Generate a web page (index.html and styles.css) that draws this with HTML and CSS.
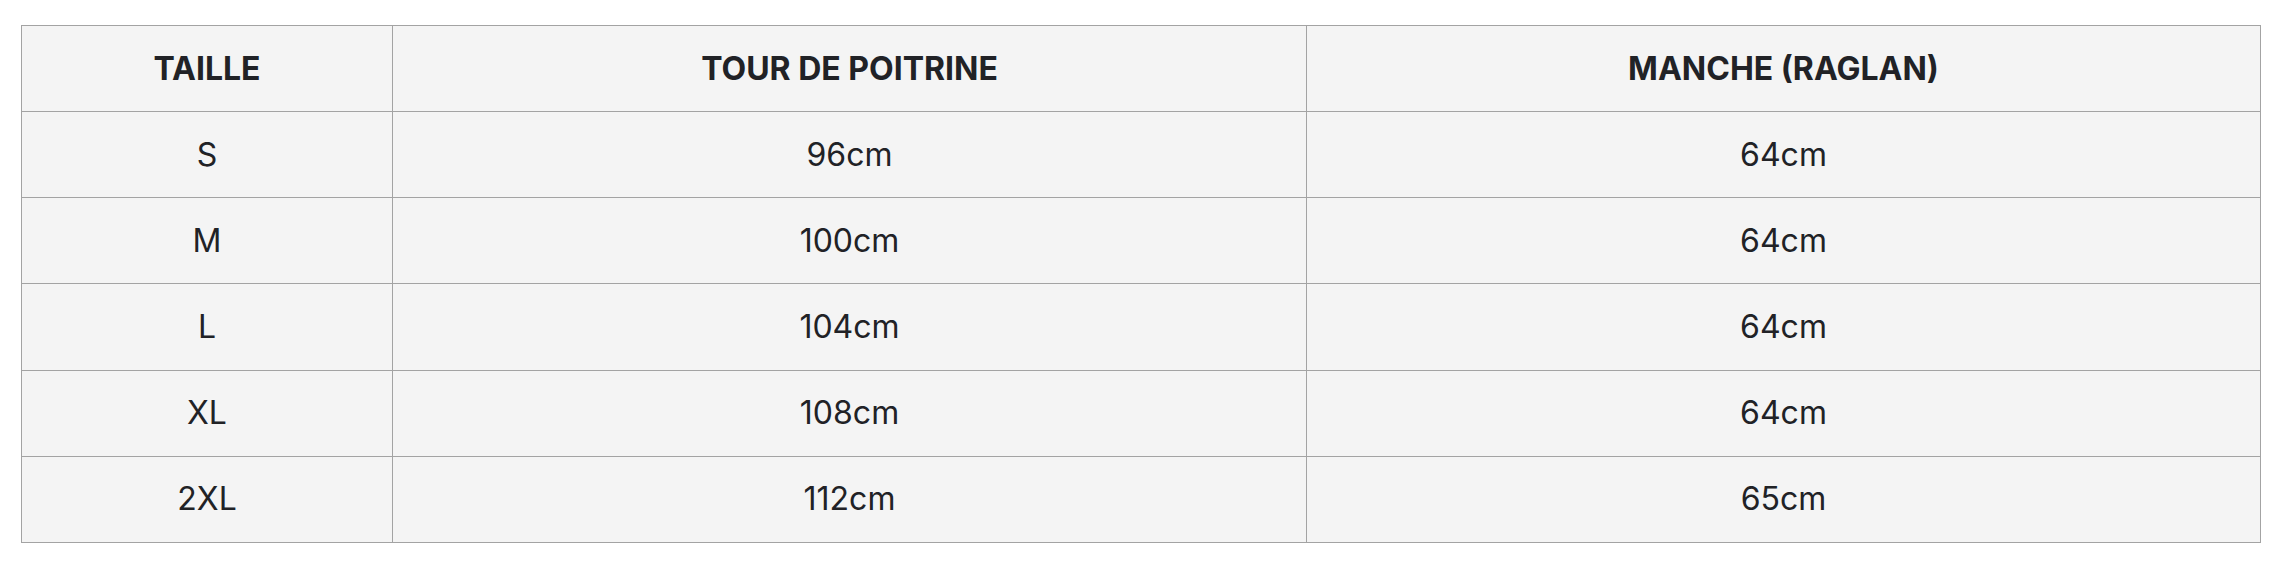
FILE: index.html
```html
<!DOCTYPE html>
<html lang="fr">
<head>
<meta charset="utf-8">
<title>Guide des tailles</title>
<link rel="stylesheet" href="styles.css">
</head>
<body>
<table class="size-table">
  <colgroup>
    <col class="col-size">
    <col class="col-chest">
    <col class="col-sleeve">
  </colgroup>
  <thead>
    <tr>
      <th>TAILLE</th>
      <th>TOUR DE POITRINE</th>
      <th>MANCHE (RAGLAN)</th>
    </tr>
  </thead>
  <tbody>
    <tr><td>S</td><td>96cm</td><td>64cm</td></tr>
    <tr><td>M</td><td>100cm</td><td>64cm</td></tr>
    <tr><td>L</td><td>104cm</td><td>64cm</td></tr>
    <tr><td>XL</td><td>108cm</td><td>64cm</td></tr>
    <tr><td>2XL</td><td>112cm</td><td>65cm</td></tr>
  </tbody>
</table>
</body>
</html>
```

FILE: styles.css
```css
html, body {
  margin: 0;
  padding: 0;
  background: #ffffff;
}

body {
  padding: 25px 0 0 21px;
  font-family: Inter, "Noto Sans", "Liberation Sans", sans-serif;
  color: #212226;
}

.size-table {
  width: 2240px;
  table-layout: fixed;
  border-collapse: collapse;
  background: #f4f4f4;
}

.col-size { width: 371px; }
.col-chest { width: 914px; }
.col-sleeve { width: auto; }

.size-table th,
.size-table td {
  height: 85.17px;
  padding: 0;
  border: 1px solid #a3a3a3;
  text-align: center;
  vertical-align: middle;
  font-size: 32px;
  line-height: 1;
}

.size-table th {
  font-weight: 700;
}

.size-table td {
  font-weight: 400;
}
```
